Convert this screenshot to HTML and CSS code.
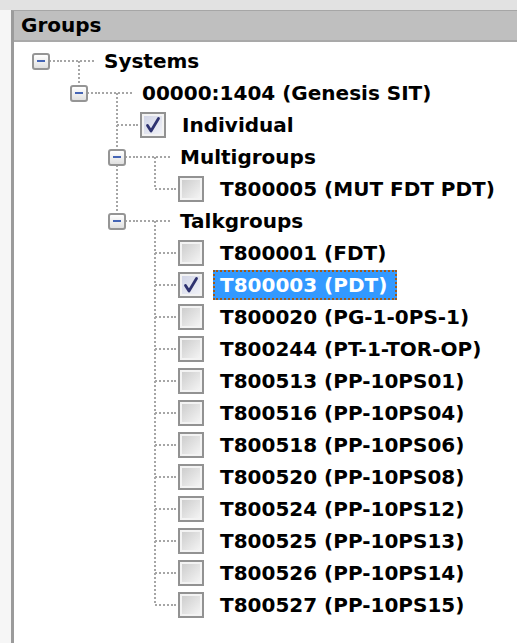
FILE: index.html
```html
<!DOCTYPE html>
<html lang="en">
<head>
<meta charset="utf-8">
<title>Groups</title>
<link rel="stylesheet" href="styles.css">
</head>
<body>
<section class="panel">
  <header class="panel-title">Groups</header>
  <ul class="tree">
    <li class="row">
      <span class="cell root"><span class="expander"></span></span>
      <span class="slot"></span>
      <span class="label">Systems</span>
    </li>
    <li class="row">
      <span class="cell"></span>
      <span class="cell elbow"><span class="expander"></span></span>
      <span class="slot"></span>
      <span class="label">00000:1404 (Genesis SIT)</span>
    </li>
    <li class="row">
      <span class="cell"></span><span class="cell"></span>
      <span class="cell tee"></span><span class="stub"></span>
      <span class="check on"><svg viewBox="0 0 22 22"><path d="M5.5 11.5 L9 17 L16.5 4.5" /></svg></span>
      <span class="label">Individual</span>
    </li>
    <li class="row">
      <span class="cell"></span><span class="cell"></span>
      <span class="cell tee"><span class="expander"></span></span>
      <span class="slot"></span>
      <span class="label">Multigroups</span>
    </li>
    <li class="row">
      <span class="cell"></span><span class="cell"></span><span class="cell pipe"></span>
      <span class="cell elbow"></span><span class="stub"></span>
      <span class="check"></span>
      <span class="label">T800005 (MUT FDT PDT)</span>
    </li>
    <li class="row">
      <span class="cell"></span><span class="cell"></span>
      <span class="cell elbow"><span class="expander"></span></span>
      <span class="slot"></span>
      <span class="label">Talkgroups</span>
    </li>
    <li class="row">
      <span class="cell"></span><span class="cell"></span><span class="cell"></span>
      <span class="cell tee"></span><span class="stub"></span>
      <span class="check"></span>
      <span class="label">T800001 (FDT)</span>
    </li>
    <li class="row">
      <span class="cell"></span><span class="cell"></span><span class="cell"></span>
      <span class="cell tee"></span><span class="stub"></span>
      <span class="check on"><svg viewBox="0 0 22 22"><path d="M5.5 11.5 L9 17 L16.5 4.5" /></svg></span>
      <span class="label selected">T800003 (PDT)</span>
    </li>
    <li class="row">
      <span class="cell"></span><span class="cell"></span><span class="cell"></span>
      <span class="cell tee"></span><span class="stub"></span>
      <span class="check"></span>
      <span class="label">T800020 (PG-1-0PS-1)</span>
    </li>
    <li class="row">
      <span class="cell"></span><span class="cell"></span><span class="cell"></span>
      <span class="cell tee"></span><span class="stub"></span>
      <span class="check"></span>
      <span class="label">T800244 (PT-1-TOR-OP)</span>
    </li>
    <li class="row">
      <span class="cell"></span><span class="cell"></span><span class="cell"></span>
      <span class="cell tee"></span><span class="stub"></span>
      <span class="check"></span>
      <span class="label">T800513 (PP-10PS01)</span>
    </li>
    <li class="row">
      <span class="cell"></span><span class="cell"></span><span class="cell"></span>
      <span class="cell tee"></span><span class="stub"></span>
      <span class="check"></span>
      <span class="label">T800516 (PP-10PS04)</span>
    </li>
    <li class="row">
      <span class="cell"></span><span class="cell"></span><span class="cell"></span>
      <span class="cell tee"></span><span class="stub"></span>
      <span class="check"></span>
      <span class="label">T800518 (PP-10PS06)</span>
    </li>
    <li class="row">
      <span class="cell"></span><span class="cell"></span><span class="cell"></span>
      <span class="cell tee"></span><span class="stub"></span>
      <span class="check"></span>
      <span class="label">T800520 (PP-10PS08)</span>
    </li>
    <li class="row">
      <span class="cell"></span><span class="cell"></span><span class="cell"></span>
      <span class="cell tee"></span><span class="stub"></span>
      <span class="check"></span>
      <span class="label">T800524 (PP-10PS12)</span>
    </li>
    <li class="row">
      <span class="cell"></span><span class="cell"></span><span class="cell"></span>
      <span class="cell tee"></span><span class="stub"></span>
      <span class="check"></span>
      <span class="label">T800525 (PP-10PS13)</span>
    </li>
    <li class="row">
      <span class="cell"></span><span class="cell"></span><span class="cell"></span>
      <span class="cell tee"></span><span class="stub"></span>
      <span class="check"></span>
      <span class="label">T800526 (PP-10PS14)</span>
    </li>
    <li class="row">
      <span class="cell"></span><span class="cell"></span><span class="cell"></span>
      <span class="cell elbow"></span><span class="stub"></span>
      <span class="check"></span>
      <span class="label">T800527 (PP-10PS15)</span>
    </li>
  </ul>
</section>
</body>
</html>
```

FILE: styles.css
```css
:root {
  --dot: #a6a6a6;
  --vdots: repeating-linear-gradient(to bottom, var(--dot) 0 2px, transparent 2px 4px);
  --hdots: repeating-linear-gradient(to right, var(--dot) 0 2px, transparent 2px 4px);
}

html, body {
  margin: 0;
  height: 100%;
}

body {
  box-sizing: border-box;
  padding: 10px 0 0 11px;
  background: linear-gradient(#e2e2e2 0 10px, #f6f6f6 10px);
  color: #000;
  font-family: "DejaVu Sans", "Noto Sans", sans-serif;
  font-weight: bold;
  font-size: 20px;
}

.panel {
  height: 100%;
  display: flex;
  flex-direction: column;
  border-left: 3px solid #9b9b9b;
  border-top: 1px solid #a6a6a6;
  background: #ffffff;
}

.panel-title {
  height: 29px;
  line-height: 29px;
  padding-left: 7px;
  background: #bfbfbf;
  border-bottom: 2px solid #a9a9a9;
}

.tree {
  list-style: none;
  margin: 0;
  padding: 3px 0 0 8px;
}

.row {
  display: flex;
  align-items: center;
  height: 32px;
}

/* one indentation column of the tree, 38px wide, guide line at its centre */
.cell {
  flex: none;
  width: 38px;
  height: 32px;
  display: flex;
  align-items: center;
  justify-content: center;
}

.pipe {
  background: var(--vdots) 18px 0 / 2px 100% no-repeat;
}

.tee {
  background:
    var(--hdots) 19px 15px / 19px 2px no-repeat,
    var(--vdots) 18px 0 / 2px 100% no-repeat;
}

.elbow {
  background:
    var(--hdots) 19px 15px / 19px 2px no-repeat,
    var(--vdots) 18px 0 / 2px 16px no-repeat;
}

.root {
  background: var(--hdots) 19px 15px / 19px 2px no-repeat;
}

/* connector between a node's column and its checkbox */
.stub {
  flex: none;
  width: 4px;
  height: 32px;
  background: var(--hdots) 0 15px / 4px 2px no-repeat;
}

/* space of an expanded parent: its connector plus the start of the children's line */
.slot {
  flex: none;
  width: 38px;
  height: 32px;
  background:
    var(--hdots) 0 15px / 34px 2px no-repeat,
    var(--vdots) 18px 16px / 2px 16px no-repeat;
}

.slot + .label {
  margin-left: -1px;
}

.expander {
  box-sizing: border-box;
  width: 18px;
  height: 17px;
  border: 2px solid #959595;
  border-radius: 3px;
  background: linear-gradient(#ffffff, #e0e0e0);
  display: flex;
  align-items: center;
  justify-content: center;
}

.expander::before {
  content: "";
  width: 8px;
  height: 2px;
  background: #4565b5;
}

.check {
  flex: none;
  box-sizing: border-box;
  width: 26px;
  height: 26px;
  border: 2px solid #929292;
  background: linear-gradient(135deg, #c9c9c9, #f8f8f8);
  box-shadow: inset 0 0 0 2px #f3f3f3;
  display: flex;
}

.check.on {
  background: linear-gradient(135deg, #cdd1e4, #f4f5fa);
}

.check svg {
  width: 100%;
  height: 100%;
}

.check path {
  fill: none;
  stroke: #2e3270;
  stroke-width: 2.8;
  stroke-linecap: round;
  stroke-linejoin: round;
}

.label {
  line-height: 26px;
  padding: 0 8px 0 5px;
  border: 2px solid transparent;
  white-space: nowrap;
}

.check + .label {
  margin-left: 9px;
}

.label.selected {
  background: #3399ff;
  color: #ffffff;
  border: 2px dotted #a15a18;
}
```
